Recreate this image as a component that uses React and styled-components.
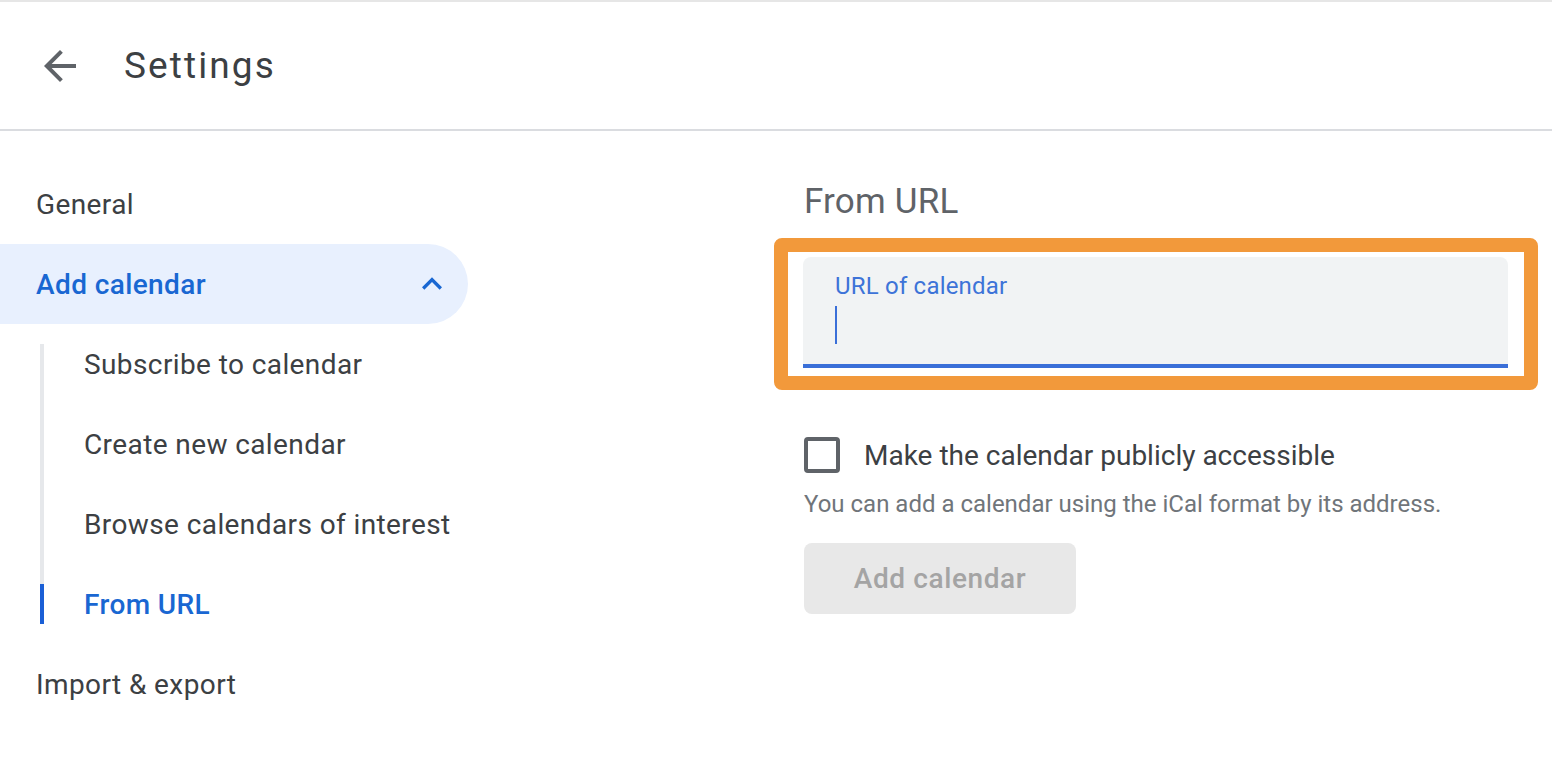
import React from "react";
import styled, { createGlobalStyle } from "styled-components";

const Global = createGlobalStyle`
  html, body { margin: 0; padding: 0; background: #fff; }
  body { font-family: Roboto, "Liberation Sans", Arial, sans-serif; color: #3c4043; }
  * { box-sizing: border-box; }
`;

const Page = styled.div`
  width: 1552px;
  height: 760px;
  overflow: hidden;
  display: flex;
  flex-direction: column;
`;

const Header = styled.header`
  height: 131px;
  border-top: 2px solid #e6e6e6;
  border-bottom: 2px solid #dadce0;
  display: flex;
  align-items: center;
  padding-left: 36px;
`;

const BackButton = styled.button`
  width: 48px;
  height: 48px;
  padding: 0;
  border: none;
  background: none;
  display: flex;
  align-items: center;
  justify-content: center;
  color: #5f6368;
  svg { width: 48px; height: 48px; display: block; }
`;

const Title = styled.h1`
  margin: 0 0 0 40px;
  font-family: Roboto, "Liberation Sans", sans-serif;
  font-weight: 400;
  font-size: 37px;
  letter-spacing: 2.1px;
  color: #3c4043;
`;

const Body = styled.div`
  display: flex;
  flex: 1;
`;

const Nav = styled.nav`
  width: 468px;
  padding-top: 33px;
  display: flex;
  flex-direction: column;
`;

const NavItem = styled.div`
  height: 80px;
  display: flex;
  align-items: center;
  justify-content: space-between;
  padding: 0 16px 0 36px;
  font-size: 28px;
  letter-spacing: 0.4px;
  font-weight: ${(p) => (p.$open ? 500 : 400)};
  color: ${(p) => (p.$open ? "#1967d2" : "#3c4043")};
  background: ${(p) => (p.$open ? "#e8f0fe" : "transparent")};
  border-radius: 0 40px 40px 0;
  svg { width: 40px; height: 40px; display: block; }
`;

const SubList = styled.div`
  margin: 20px 0 20px 40px;
  border-left: 4px solid #e6e8eb;
  display: flex;
  flex-direction: column;
  gap: 40px;
`;

const SubItem = styled.div`
  height: 40px;
  display: flex;
  align-items: center;
  padding-left: 40px;
  font-size: 28px;
  margin-left: ${(p) => (p.$active ? "-4px" : "0")};
  border-left: ${(p) => (p.$active ? "4px solid #1a5fd6" : "none")};
  font-weight: ${(p) => (p.$active ? 500 : 400)};
  color: ${(p) => (p.$active ? "#1967d2" : "#3c4043")};
  letter-spacing: 0.4px;
`;

const Main = styled.main`
  margin-left: 336px;
  width: 704px;
  padding-top: 51px;
  display: flex;
  flex-direction: column;
  align-items: flex-start;
`;

const Heading = styled.h2`
  margin: 0;
  font-size: 35px;
  line-height: 40px;
  font-weight: 400;
  color: #5f6368;
  letter-spacing: 0.2px;
`;

const Highlight = styled.div`
  margin: 16px -30px 0;
  width: calc(100% + 60px);
  border: 14px solid #f2993b;
  border-radius: 8px;
  padding: 5px 16px 8px 15px;
  background: #fff;
`;

const Field = styled.div`
  height: 111px;
  background: #f1f3f4;
  border-radius: 8px 8px 0 0;
  border-bottom: 4px solid #3a6fd8;
  padding: 15px 32px 0;
`;

const FieldLabel = styled.div`
  font-size: 24px;
  line-height: 28px;
  letter-spacing: 0.2px;
  color: #3d73d8;
`;

const Caret = styled.div`
  margin-top: 6px;
  width: 2px;
  height: 38px;
  background: #3a6fd8;
`;

const CheckRow = styled.label`
  margin-top: 47px;
  display: flex;
  align-items: center;
  gap: 24px;
  font-size: 28px;
  color: #3c4043;
`;

const Box = styled.span`
  width: 36px;
  height: 36px;
  border: 4px solid #5f6368;
  border-radius: 4px;
  display: block;
`;

const Help = styled.p`
  margin: 15px 0 0;
  font-size: 24px;
  line-height: 32px;
  color: #70757a;
`;

const Button = styled.button`
  margin-top: 23px;
  width: 272px;
  height: 71px;
  border: none;
  border-radius: 8px;
  background: #e8e8e8;
  color: #a4a4a4;
  font-family: Roboto, "Liberation Sans", sans-serif;
  font-size: 28px;
  font-weight: 500;
  letter-spacing: 0.6px;
`;

export default function App() {
  return (
    <Page>
      <Global />
      <Header>
        <BackButton aria-label="Back">
          <svg viewBox="0 0 24 24" fill="currentColor">
            <path d="M20 11H7.83l5.59-5.59L12 4l-8 8 8 8 1.41-1.41L7.83 13H20v-2z" />
          </svg>
        </BackButton>
        <Title>Settings</Title>
      </Header>
      <Body>
        <Nav>
          <NavItem>General</NavItem>
          <NavItem $open>
            Add calendar
            <svg viewBox="0 0 24 24" fill="currentColor">
              <path d="M12 8l-6 6 1.41 1.41L12 10.83l4.59 4.58L18 14z" />
            </svg>
          </NavItem>
          <SubList>
            <SubItem>Subscribe to calendar</SubItem>
            <SubItem>Create new calendar</SubItem>
            <SubItem>Browse calendars of interest</SubItem>
            <SubItem $active>From URL</SubItem>
          </SubList>
          <NavItem>Import &amp; export</NavItem>
        </Nav>
        <Main>
          <Heading>From URL</Heading>
          <Highlight>
            <Field>
              <FieldLabel>URL of calendar</FieldLabel>
              <Caret />
            </Field>
          </Highlight>
          <CheckRow>
            <Box />
            Make the calendar publicly accessible
          </CheckRow>
          <Help>You can add a calendar using the iCal format by its address.</Help>
          <Button disabled>Add calendar</Button>
        </Main>
      </Body>
    </Page>
  );
}
